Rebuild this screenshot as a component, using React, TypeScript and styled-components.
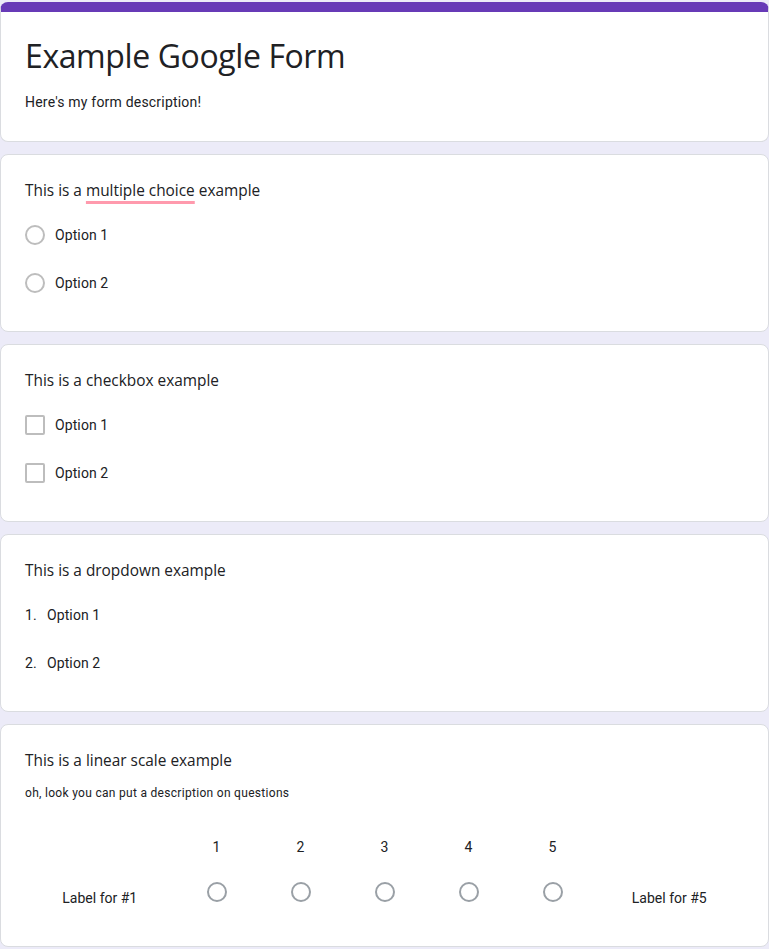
import React from 'react'
import styled, { createGlobalStyle } from 'styled-components'

const GlobalStyle = createGlobalStyle`
  html, body {
    margin: 0;
    padding: 0;
    background: #ecebf8;
  }
  body {
    font-family: Roboto, Arial, sans-serif;
    color: #202124;
  }
`

const Page = styled.div`
  display: flex;
  flex-direction: column;
  gap: 12px;
  padding-top: 2px;
  padding-bottom: 2px;
`

const Card = styled.div<{ $accent?: boolean }>`
  background: #fff;
  border: 1px solid #dadce0;
  border-radius: 8px;
  overflow: hidden;
  ${p => p.$accent && `border-top: 10px solid #673ab7;`}
`

const CardBody = styled.div<{ $bottom?: number }>`
  padding: 24px 24px ${p => p.$bottom ?? 24}px 24px;
`

const FormTitle = styled.h1`
  margin: 0;
  font-family: 'Open Sans', Roboto, sans-serif;
  font-weight: 400;
  font-size: 32px;
  line-height: 40px;
  letter-spacing: -0.4px;
  color: #202124;
`

const FormDescription = styled.p`
  margin: 16px 0 0;
  font-size: 14px;
  line-height: 20px;
  letter-spacing: 0.2px;
  color: #202124;
`

const QuestionTitle = styled.div`
  font-family: 'Open Sans', Roboto, sans-serif;
  font-size: 15.4px;
  line-height: 24px;
  color: #202124;
`

const Spell = styled.span`
  text-decoration: underline;
  text-decoration-color: #ff9aad;
  text-decoration-thickness: 3px;
  text-underline-offset: 5px;
`

const QuestionDescription = styled.div`
  margin-top: 12px;
  font-size: 12px;
  line-height: 16px;
  letter-spacing: 0.3px;
  color: #202124;
`

const OptionList = styled.div`
  display: flex;
  flex-direction: column;
  margin-top: 8px;
`

const OptionRow = styled.div`
  display: flex;
  align-items: center;
  height: 48px;
  font-size: 14px;
  letter-spacing: 0.1px;
  color: #202124;
`

const Radio = styled.span<{ $dark?: boolean }>`
  box-sizing: border-box;
  width: 20px;
  height: 20px;
  border-radius: 50%;
  border: 2px solid ${p => (p.$dark ? '#9aa0a6' : '#bdbdbd')};
  flex-shrink: 0;
`

const Check = styled.span`
  box-sizing: border-box;
  width: 20px;
  height: 20px;
  border-radius: 2px;
  border: 2px solid #bdbdbd;
  flex-shrink: 0;
`

const OptionLabel = styled.span`
  margin-left: 10px;
`

const Number = styled.span`
  width: 22px;
  font-size: 14px;
`

const Scale = styled.div`
  display: grid;
  grid-template-columns: 1fr repeat(5, 84px) 1fr;
  grid-template-rows: 44px 45px;
  margin-top: 24px;
  font-size: 14px;
  color: #202124;
`

const ScaleNum = styled.div<{ $col: number }>`
  grid-column: ${p => p.$col};
  grid-row: 1;
  display: flex;
  justify-content: center;
  align-items: center;
`

const ScaleRadio = styled.div<{ $col: number }>`
  grid-column: ${p => p.$col};
  grid-row: 2;
  display: flex;
  justify-content: center;
  align-items: center;
`

const ScaleLabel = styled.div<{ $col: number }>`
  grid-column: ${p => p.$col};
  grid-row: 2;
  display: flex;
  justify-content: center;
  align-items: center;
  padding-top: 12px;
`

export default function App() {
  const nums = [1, 2, 3, 4, 5]
  return (
    <>
      <GlobalStyle />
      <Page>
        <Card $accent>
          <CardBody $bottom={29}>
            <FormTitle>Example Google Form</FormTitle>
            <FormDescription>Here's my form description!</FormDescription>
          </CardBody>
        </Card>

        <Card>
          <CardBody $bottom={24}>
            <QuestionTitle>
              This is a <Spell>multiple choice</Spell> example
            </QuestionTitle>
            <OptionList>
              {['Option 1', 'Option 2'].map(o => (
                <OptionRow key={o}>
                  <Radio />
                  <OptionLabel>{o}</OptionLabel>
                </OptionRow>
              ))}
            </OptionList>
          </CardBody>
        </Card>

        <Card>
          <CardBody $bottom={24}>
            <QuestionTitle>This is a checkbox example</QuestionTitle>
            <OptionList>
              {['Option 1', 'Option 2'].map(o => (
                <OptionRow key={o}>
                  <Check />
                  <OptionLabel>{o}</OptionLabel>
                </OptionRow>
              ))}
            </OptionList>
          </CardBody>
        </Card>

        <Card>
          <CardBody $bottom={24}>
            <QuestionTitle>This is a dropdown example</QuestionTitle>
            <OptionList>
              {['Option 1', 'Option 2'].map((o, i) => (
                <OptionRow key={o}>
                  <Number>{i + 1}.</Number>
                  <span>{o}</span>
                </OptionRow>
              ))}
            </OptionList>
          </CardBody>
        </Card>

        <Card>
          <CardBody $bottom={32}>
            <QuestionTitle>This is a linear scale example</QuestionTitle>
            <QuestionDescription>oh, look you can put a description on questions</QuestionDescription>
            <Scale>
              {nums.map(n => (
                <ScaleNum key={n} $col={n + 1}>{n}</ScaleNum>
              ))}
              <ScaleLabel $col={1}>Label for #1</ScaleLabel>
              {nums.map(n => (
                <ScaleRadio key={n} $col={n + 1}>
                  <Radio $dark />
                </ScaleRadio>
              ))}
              <ScaleLabel $col={7}>Label for #5</ScaleLabel>
            </Scale>
          </CardBody>
        </Card>
      </Page>
    </>
  )
}
